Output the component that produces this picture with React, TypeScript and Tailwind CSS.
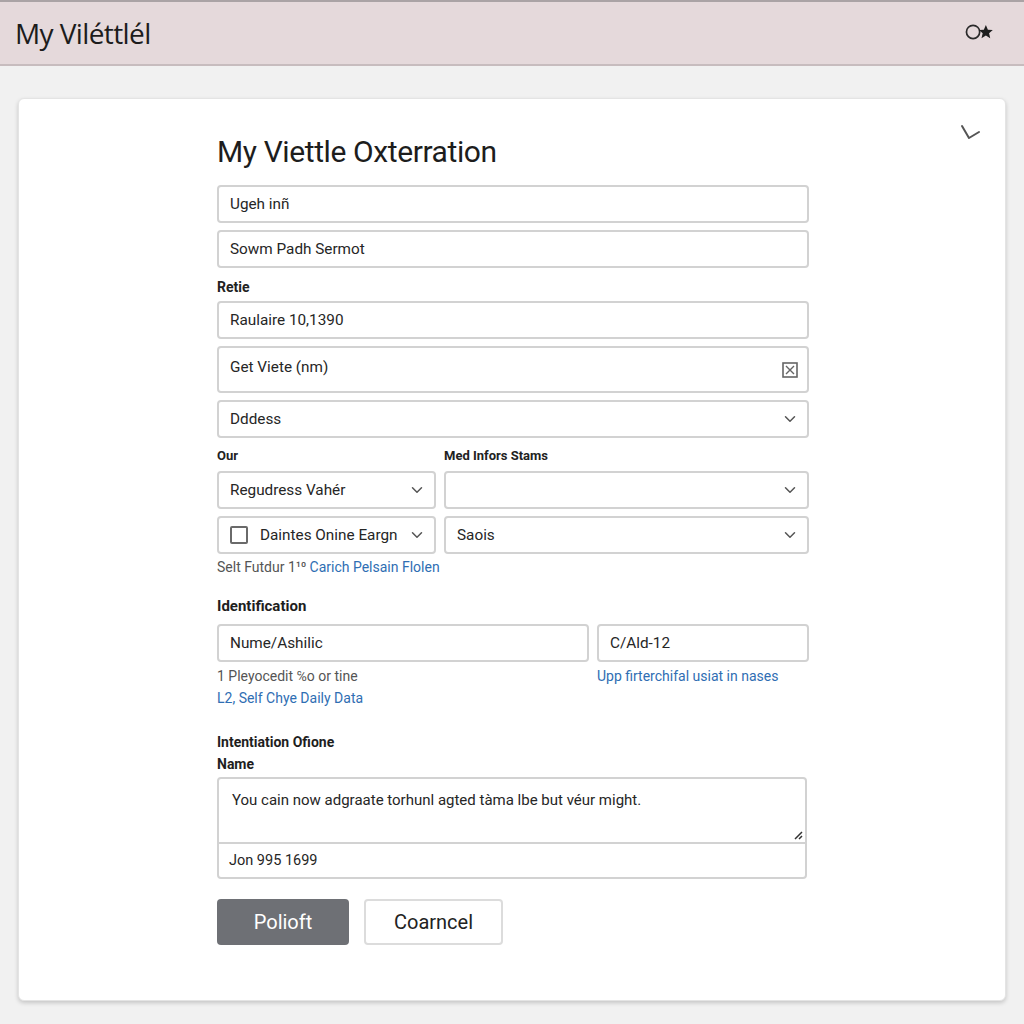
import { ChevronDown } from 'lucide-react'

const font = { fontFamily: 'Roboto, "Liberation Sans", sans-serif' }

function Field({ text, className = '' }: { text: string; className?: string }) {
  return (
    <div
      className={`h-[38px] flex items-center px-[11px] bg-white border-2 border-[#d2d2d2] rounded-[4px] text-[15.3px] text-[#262626] ${className}`}
    >
      {text}
    </div>
  )
}

function Select({ text, className = '', check = false }: { text: string; className?: string; check?: boolean }) {
  return (
    <div
      className={`h-[38px] flex items-center pl-[11px] pr-[8px] bg-white border-2 border-[#d2d2d2] rounded-[4px] text-[15.3px] text-[#262626] ${className}`}
    >
      {check && <span className="w-[18px] h-[18px] border-2 border-[#6a6a6a] rounded-[2px] mr-[12px] shrink-0" />}
      <span className="flex-1 truncate">{text}</span>
      <ChevronDown className="w-[18px] h-[18px] text-[#555] shrink-0" strokeWidth={2} />
    </div>
  )
}

export default function App() {
  return (
    <div className="min-h-[1024px] bg-[#f1f1f1]" style={font}>
      {/* Header */}
      <header className="h-[66px] bg-[#e5d9db] border-t-2 border-b-2 border-t-[#aaa3a5] border-b-[#c7bcbe] flex items-center justify-between pl-[15px] pr-[28px]">
        <h1 className="text-[28px] text-[#1c1c1c] tracking-[-0.6px]" style={{ fontFamily: '"Open Sans", sans-serif' }}>
          My Viléttlél
        </h1>
        <svg viewBox="0 0 30 20" className="w-[32px] h-[22px]">
          <circle cx="8.5" cy="9" r="6.2" fill="none" stroke="#2a2a2a" strokeWidth="1.6" />
          <path
            d="M20.5 2.5l1.9 4.4 4.6.4-3.5 3 1.1 4.6-4.1-2.5-4.1 2.5 1.1-4.6-3.5-3 4.6-.4z"
            fill="#1e1e1e"
          />
        </svg>
      </header>

      {/* Card */}
      <div className="mx-[18px] mt-[32px] bg-white rounded-[6px] shadow-[0_2px_4px_rgba(0,0,0,0.18)] border border-[#e4e4e4] relative pl-[198px] pr-[196px] pt-[34px] pb-[55px]">
        <svg viewBox="0 0 24 20" className="absolute right-[22px] top-[25px] w-[24px] h-[20px]">
          <path d="M3 2l7 12 10-6" fill="none" stroke="#555" strokeWidth="2" strokeLinecap="round" strokeLinejoin="round" />
        </svg>

        <h2 className="text-[30px] leading-[38px] text-[#1d1d1d] tracking-[-0.4px] mb-[14px]">My Viettle Oxterration</h2>

        <div className="flex flex-col gap-[7px]">
          <Field text="Ugeh inñ" />
          <Field text="Sowm Padh Sermot" />
        </div>

        <div className="mt-[9px] mb-[4px] text-[14px] leading-[20px] font-bold text-[#222]">Retie</div>

        <div className="flex flex-col gap-[7px]">
          <Field text="Raulaire 10,1390" />
          <div className="h-[47px] flex justify-between px-[11px] pt-[8px] bg-white border-2 border-[#d2d2d2] rounded-[4px] text-[15.3px] text-[#262626]">
            <span>Get Viete (nm)</span>
            <svg viewBox="0 0 16 16" className="w-[16px] h-[16px] mt-[6px] mr-[-2px]">
              <rect x="1" y="1" width="14" height="14" fill="none" stroke="#666" strokeWidth="1.6" />
              <path d="M4 4l8 8M12 4l-8 8" stroke="#666" strokeWidth="1.4" />
            </svg>
          </div>
          <Select text="Dddess" />
        </div>

        <div className="mt-[8px] mb-[5px] grid grid-cols-[219px_1fr] gap-x-[8px] text-[13px] leading-[20px] font-bold text-[#222]">
          <span>Our</span>
          <span>Med Infors Stams</span>
        </div>

        <div className="grid grid-cols-[219px_1fr] gap-x-[8px] gap-y-[7px]">
          <Select text="Regudress Vahér" />
          <Select text="" />
          <Select text="Daintes Onine Eargn" check />
          <Select text="Saois" />
        </div>

        <div className="mt-[4px] text-[14px] leading-[18px] text-[#555]">
          Selt Futdur 1¹⁰ <span className="text-[#2f6eb3]">Carich Pelsain Flolen</span>
        </div>

        <div className="mt-[20px] mb-[8px] text-[15px] leading-[20px] font-bold text-[#1e1e1e]">Identification</div>

        <div className="grid grid-cols-[372px_1fr] gap-x-[8px]">
          <Field text="Nume/Ashilic" />
          <Field text="C/Ald-12" />
          <div className="mt-[5px] text-[14px] leading-[18px] text-[#555]">1 Pleyocedit ℅o or tine</div>
          <div className="mt-[5px] text-[14px] leading-[18px] text-[#2f6eb3]">Upp firterchifal usiat in nases</div>
        </div>
        <div className="mt-[4px] text-[14px] leading-[18px] text-[#2f6eb3]">L2, Self Chye Daily Data</div>

        <div className="mt-[25px] text-[14px] leading-[20px] font-bold text-[#1e1e1e]">Intentiation Ofione</div>
        <div className="mt-[2px] mb-[3px] text-[14px] leading-[20px] font-bold text-[#1e1e1e]">Name</div>

        <div className="mr-[2px] border-2 border-[#d2d2d2] rounded-[4px] bg-white">
          <div className="h-[65px] relative px-[13px] pt-[10px] text-[15px] text-[#262626] border-b-2 border-[#d2d2d2]">
            You cain now adgraate torhunl agted tàma lbe but véur might.
            <svg viewBox="0 0 10 10" className="absolute right-[2px] bottom-[2px] w-[10px] h-[10px]">
              <path d="M2 9L9 2M6 9l3-3" stroke="#333" strokeWidth="1.5" />
            </svg>
          </div>
          <div className="h-[33px] flex items-center px-[10px] text-[14.5px] text-[#262626]">Jon 995 1699</div>
        </div>

        <div className="mt-[20px] flex gap-[15px]">
          <button className="w-[132px] h-[46px] rounded-[4px] bg-[#6e7075] text-white text-[20px]">Polioft</button>
          <button className="w-[139px] h-[46px] rounded-[4px] bg-white border-2 border-[#dcdcdc] text-[#222] text-[20px]">
            Coarncel
          </button>
        </div>
      </div>
    </div>
  )
}
